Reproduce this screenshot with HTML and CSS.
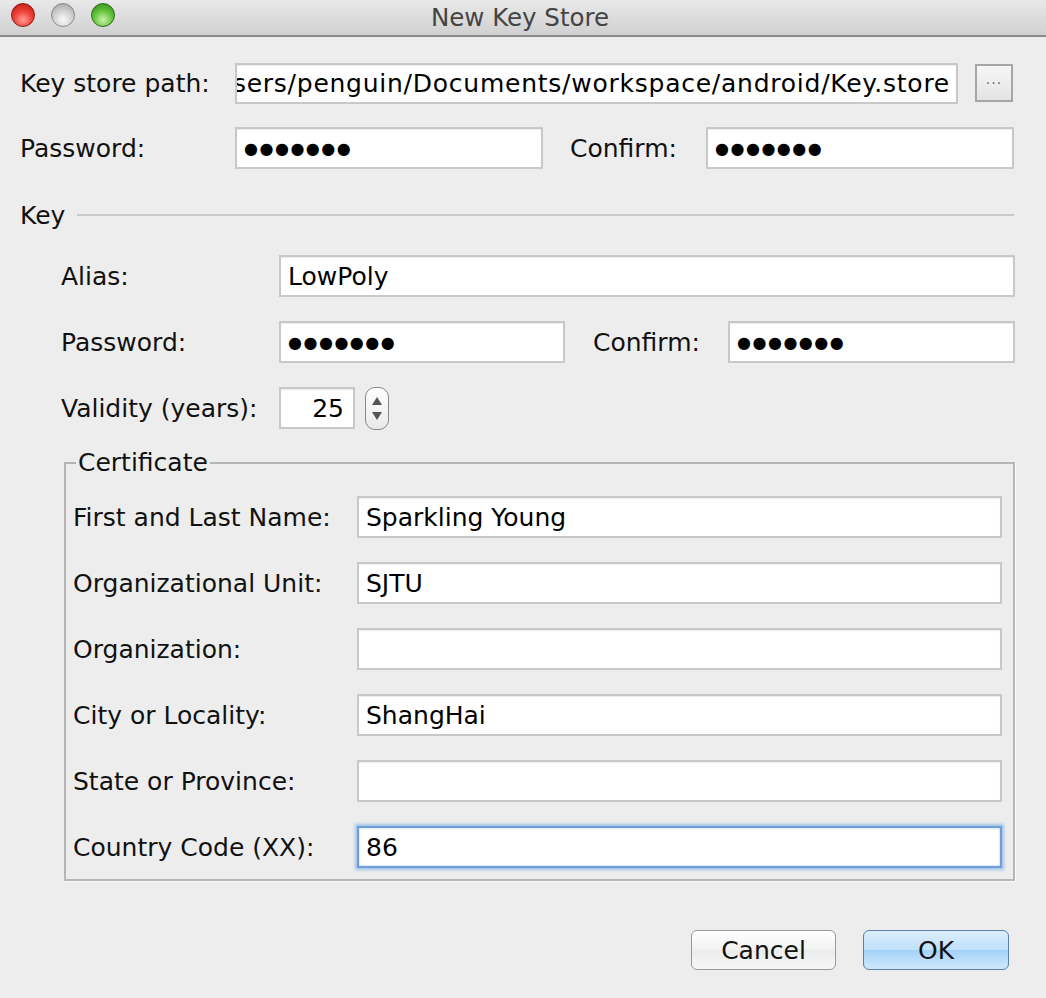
FILE: index.html
```html
<!DOCTYPE html>
<html>
<head>
<meta charset="utf-8">
<title>New Key Store</title>
<link rel="stylesheet" href="styles.css">
</head>
<body>
<div class="window">
  <div class="titlebar">
    <div class="lights">
      <span class="light red"></span>
      <span class="light gray"></span>
      <span class="light green"></span>
    </div>
    <div class="title">New Key Store</div>
  </div>

  <div class="content">
    <div class="row r-path">
      <div class="label w-top">Key store path:</div>
      <div class="field f-path"><span class="scroll">/Users/penguin/Documents/workspace/android/Key.store</span></div>
      <div class="browse">···</div>
    </div>

    <div class="row r-gap23">
      <div class="label w-top">Password:</div>
      <div class="field f-half"><span class="dots">●●●●●●●</span></div>
      <div class="label w-confirm">Confirm:</div>
      <div class="field f-half"><span class="dots">●●●●●●●</span></div>
    </div>

    <div class="separator">
      <span class="sep-label">Key</span>
      <span class="sep-line"></span>
    </div>

    <div class="key">
      <div class="row r-alias">
        <div class="label w-key">Alias:</div>
        <div class="field f-alias">LowPoly</div>
      </div>
      <div class="row r-gap24">
        <div class="label w-key">Password:</div>
        <div class="field f-half2"><span class="dots">●●●●●●●</span></div>
        <div class="label w-confirm2">Confirm:</div>
        <div class="field f-half3"><span class="dots">●●●●●●●</span></div>
      </div>
      <div class="row r-gap24">
        <div class="label w-key">Validity (years):</div>
        <div class="field f-num">25</div>
        <div class="spinner">
          <span class="tri up"></span>
          <span class="tri down"></span>
        </div>
      </div>
    </div>

    <fieldset class="cert">
      <legend>Certificate</legend>
      <div class="row c-first">
        <div class="label w-cert">First and Last Name:</div>
        <div class="field f-cert">Sparkling Young</div>
      </div>
      <div class="row c-row">
        <div class="label w-cert">Organizational Unit:</div>
        <div class="field f-cert">SJTU</div>
      </div>
      <div class="row c-row">
        <div class="label w-cert">Organization:</div>
        <div class="field f-cert"></div>
      </div>
      <div class="row c-row">
        <div class="label w-cert">City or Locality:</div>
        <div class="field f-cert">ShangHai</div>
      </div>
      <div class="row c-row">
        <div class="label w-cert">State or Province:</div>
        <div class="field f-cert"></div>
      </div>
      <div class="row c-row">
        <div class="label w-cert">Country Code (XX):</div>
        <div class="field f-cert focused">86</div>
      </div>
    </fieldset>

    <div class="buttons">
      <div class="btn cancel">Cancel</div>
      <div class="btn ok">OK</div>
    </div>
  </div>
</div>
</body>
</html>
```

FILE: styles.css
```css
html, body {
  margin: 0;
  padding: 0;
  background: #ededed;
}
body {
  width: 1046px;
  height: 998px;
  overflow: hidden;
  font-family: "DejaVu Sans", "Liberation Sans", sans-serif;
  font-size: 25px;
  color: #111;
}
.window {
  width: 1046px;
  height: 998px;
  background: #ededed;
}
.titlebar {
  position: relative;
  height: 35px;
  border-bottom: 2px solid #8a8a8a;
  background: linear-gradient(#e9e9e9, #d0d0d0);
  display: flex;
  align-items: center;
  justify-content: center;
}
.lights {
  position: absolute;
  left: 11px;
  top: 3px;
  display: flex;
  gap: 16px;
}
.light {
  width: 24px;
  height: 24px;
  border-radius: 50%;
  box-sizing: border-box;
}
.light.red {
  background: radial-gradient(circle at 50% 72%, #ff9c96 0%, #f0433a 45%, #b5130c 100%);
  border: 1px solid #8c1a14;
}
.light.gray {
  background: radial-gradient(circle at 50% 72%, #fafafa 0%, #cfcfcf 50%, #9a9a9a 100%);
  border: 1px solid #8a8a8a;
}
.light.green {
  background: radial-gradient(circle at 50% 72%, #c8f5a8 0%, #63c43c 48%, #2e8416 100%);
  border: 1px solid #2e6b1c;
}
.title {
  color: #444;
  font-size: 24.5px;
  margin-left: -6px;
}

.content {
  padding: 0 31px 0 20px;
}
.row {
  display: flex;
  align-items: center;
  height: 42px;
}
.r-path { margin-top: 25px; }
.r-gap23 { margin-top: 23px; }
.r-gap24 { margin-top: 24px; }
.label {
  flex: none;
  white-space: nowrap;
  color: #111;
}
.w-top { width: 215px; }
.w-confirm { width: 136px; margin-left: 27px; }
.w-key { width: 218px; }
.w-confirm2 { width: 135px; margin-left: 28px; }
.w-cert { width: 284px; }

.field {
  flex: none;
  box-sizing: border-box;
  height: 42px;
  background: #fff;
  border: 2px solid #c8c8c8;
  box-shadow: inset 0 1px 1px rgba(0,0,0,0.08);
  padding: 0 7px;
  display: flex;
  align-items: center;
  white-space: nowrap;
  overflow: hidden;
  color: #000;
}
.f-path {
  width: 723px;
  height: 41px;
  justify-content: flex-end;
  padding-left: 0;
  padding-right: 6px;
}
.scroll {
  flex: none;
  letter-spacing: 0.75px;
}
.f-half { width: 308px; }
.f-alias { width: 736px; }
.f-half2 { width: 286px; }
.f-half3 { width: 287px; }
.f-num {
  width: 76px;
  justify-content: flex-end;
  padding-right: 9px;
}
.f-cert { width: 645px; }
.focused {
  border: 2px solid #6f9fd6;
  box-shadow: 0 0 3px 2px #9ec2ea, inset 0 0 2px #8fb6e3;
}
.dots {
  font-size: 16px;
  letter-spacing: 1.5px;
  color: #000;
}

.browse {
  flex: none;
  box-sizing: border-box;
  width: 38px;
  height: 38px;
  margin-left: 17px;
  border: 2px solid #a6a6a6;
  background: linear-gradient(#f6f6f6, #e4e4e4);
  color: #6a6a6a;
  font-size: 14px;
  display: flex;
  align-items: center;
  justify-content: center;
  letter-spacing: 1px;
}

.separator {
  display: flex;
  align-items: center;
  height: 22px;
  margin-top: 35px;
}
.sep-label { flex: none; width: 57px; }
.sep-line {
  flex: 1;
  height: 2px;
  background: #c9c9c9;
  margin-right: 1px;
}

.key { margin-left: 41px; margin-top: 29px; }
.r-alias { margin-top: 0; }

.spinner {
  flex: none;
  box-sizing: border-box;
  width: 24px;
  height: 43px;
  margin-left: 10px;
  border: 1px solid #888;
  border-radius: 10px;
  background: linear-gradient(#ffffff, #e9e9e9);
  display: flex;
  flex-direction: column;
  align-items: center;
  justify-content: center;
  gap: 7px;
}
.tri {
  width: 0;
  height: 0;
  border-left: 5px solid transparent;
  border-right: 5px solid transparent;
}
.tri.up { border-bottom: 8px solid #555; }
.tri.down { border-top: 8px solid #555; }

.cert {
  margin: 20px 0 0 44px;
  padding: 0 12px 11px 7px;
  border: 2px solid #b6b6b6;
  box-shadow: 1px 1px 0 #fbfbfb;
  min-inline-size: 0;
}
.cert legend {
  margin-left: 3px;
  padding: 0 2px;
  line-height: 28px;
  color: #111;
}
.c-first { margin-top: 19px; }
.c-row { margin-top: 24px; }

.buttons {
  display: flex;
  justify-content: flex-end;
  gap: 27px;
  margin-top: 49px;
  margin-right: 6px;
}
.btn {
  box-sizing: border-box;
  height: 40px;
  border-radius: 6px;
  display: flex;
  align-items: center;
  justify-content: center;
  color: #111;
}
.cancel {
  width: 145px;
  border: 1px solid #9a9a9a;
  background: linear-gradient(#ffffff, #f2f2f2 50%, #ebebeb 51%, #f7f7f7);
}
.ok {
  width: 146px;
  border: 1px solid #5b7fa9;
  background: linear-gradient(#dcedfd, #bfe0fb 50%, #a5d2f8 51%, #cde8fd);
}
```
